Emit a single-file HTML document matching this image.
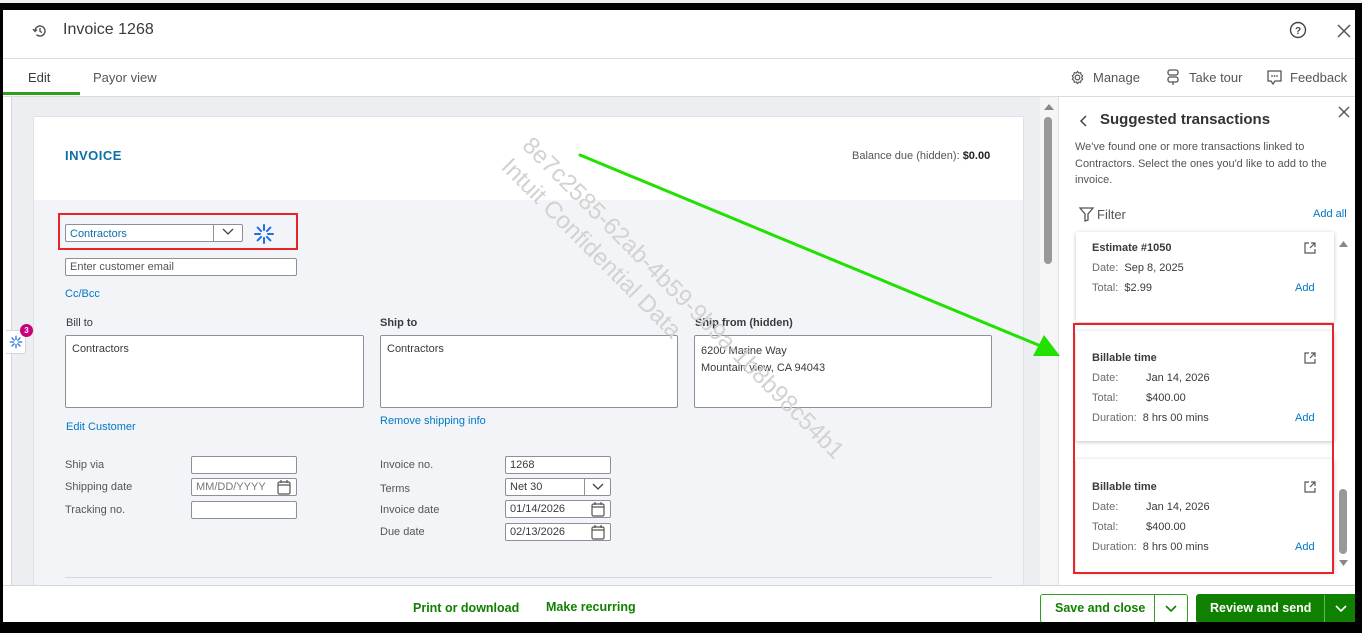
<!DOCTYPE html>
<html><head><meta charset="utf-8"><style>
*{box-sizing:border-box;margin:0;padding:0}
body{width:1362px;height:633px;overflow:hidden;background:#000;font-family:"Liberation Sans",Arial,sans-serif;position:relative;color:#393a3d}
.a{position:absolute}
.frame{position:absolute;left:3px;top:10px;width:1352px;height:612px;background:#fff;overflow:hidden}
.lbl{font-size:11px;color:#393a3d}
.inp{position:absolute;background:#fff;border:1px solid #8d9096;border-radius:2px;font-size:11px;padding:2px 4px;color:#393a3d}
.link{color:#0077c5;font-size:11px}
.card{position:absolute;background:#fff;box-shadow:0 1px 4px rgba(0,0,0,.25);border-radius:2px}
.ct{font-size:11px;color:#393a3d;font-weight:bold}
.cr{font-size:11px;color:#6b6c72}
.cr b{font-weight:normal;color:#393a3d}
.add{color:#0077c5;font-size:11px}
</style></head><body>
<div class="a" style="left:0;top:0;width:1362px;height:3px;background:#f0f0f0"></div>
<div class="frame">
 <svg class="a" style="left:28px;top:12px" width="18" height="18" viewBox="0 0 18 18"><path d="M4 9a5 5 0 1 1 1.5 3.6" fill="none" stroke="#555" stroke-width="1.5"/><path d="M2 7l2 2.5 2-2" fill="none" stroke="#555" stroke-width="1.4"/><path d="M9 6v3.3l2 1.3" fill="none" stroke="#555" stroke-width="1.4"/></svg>
 <div class="a" style="left:60px;top:11px;font-size:16px;color:#393a3d">Invoice 1268</div>
 <svg class="a" style="left:1286px;top:11px" width="18" height="18" viewBox="0 0 18 18"><circle cx="9" cy="9" r="7.5" fill="none" stroke="#444" stroke-width="1.4"/><text x="9" y="13" text-anchor="middle" font-size="10" font-weight="bold" fill="#444" font-family="Liberation Sans">?</text></svg>
 <svg class="a" style="left:1334px;top:14px" width="14" height="14"><path d="M1 1L13 13M13 1L1 13" stroke="#555" stroke-width="1.5"/></svg>
 <div class="a" style="left:0;top:48px;width:1352px;height:1px;background:#dcdcdc"></div>
 <div class="a" style="left:25px;top:60px;font-size:13px">Edit</div>
 <div class="a" style="left:90px;top:60px;font-size:13px;color:#555">Payor view</div>
 <div class="a" style="left:0;top:82px;width:77px;height:3px;background:#2ca01c"></div>
 <svg class="a" style="left:1067px;top:60px" width="15" height="15" viewBox="0 0 16 16"><circle cx="8" cy="8" r="2.5" fill="none" stroke="#555" stroke-width="1.3"/><path d="M8 1.5l1.3 1.7 2.1-.4.4 2.1 1.7 1.3-1 1.8 1 1.8-1.7 1.3-.4 2.1-2.1-.4L8 14.5l-1.3-1.7-2.1.4-.4-2.1-1.7-1.3 1-1.8-1-1.8 1.7-1.3.4-2.1 2.1.4z" fill="none" stroke="#555" stroke-width="1.2"/></svg>
 <div class="a" style="left:1090px;top:60px;font-size:13px;color:#555">Manage</div>
 <svg class="a" style="left:1163px;top:59px" width="14" height="16"><rect x="2" y="1" width="10" height="5" rx="2" fill="none" stroke="#555" stroke-width="1.3"/><rect x="2" y="8" width="10" height="5" rx="2" fill="none" stroke="#555" stroke-width="1.3"/><path d="M7 13v3" stroke="#555" stroke-width="1.3"/></svg>
 <div class="a" style="left:1186px;top:60px;font-size:13px;color:#555">Take tour</div>
 <svg class="a" style="left:1263px;top:59px" width="17" height="17"><path d="M2 2h13v10H9l-2 3-2-3H2z" fill="none" stroke="#555" stroke-width="1.3"/><circle cx="6" cy="7" r=".9" fill="#555"/><circle cx="8.5" cy="7" r=".9" fill="#555"/><circle cx="11" cy="7" r=".9" fill="#555"/></svg>
 <div class="a" style="left:1287px;top:60px;font-size:13px;color:#555">Feedback</div>
 <div class="a" style="left:0;top:86px;width:1352px;height:1px;background:#dcdcdc"></div>

 <div class="a" style="left:0;top:87px;width:1037px;height:488px;background:#eceef1"></div>
 <div class="a" style="left:0;top:87px;width:9px;height:488px;background:#fff;border-right:1px solid #d4d7dc"></div>
 <div class="a" style="left:30px;top:106px;width:991px;height:480px;background:#f3f4f7;border:1px solid #dfe1e5"></div>
 <div class="a" style="left:30px;top:106px;width:991px;height:84px;background:#fff;border:1px solid #dfe1e5;border-bottom:none"></div>
 <div class="a" style="left:62px;top:138px;font-size:13px;font-weight:bold;color:#0d6fa8;letter-spacing:.5px">INVOICE</div>
 <div class="a" style="left:849px;top:140px;font-size:11px;color:#555">Balance due (hidden): <b style="color:#222">$0.00</b></div>

 <div class="a" style="left:55px;top:203px;width:240px;height:37px;border:2px solid #e8232a"></div>
 <div class="inp" style="left:62px;top:214px;width:178px;height:18px;color:#0d6fa8;padding-top:3px">Contractors</div>
 <div class="a" style="left:210px;top:215px;width:1px;height:16px;background:#8d9096"></div>
 <svg class="a" style="left:219px;top:218px" width="12" height="8"><path d="M1 1l5 5 5-5" fill="none" stroke="#444" stroke-width="1.3"/></svg>
 <svg class="a" style="left:250px;top:213px" width="22" height="22" viewBox="0 0 22 22"><g stroke="#1f6ee0" stroke-width="2" stroke-linecap="round"><path d="M11 2v5M11 15v5M2 11h5M15 11h5M4.6 4.6l3.5 3.5M13.9 13.9l3.5 3.5M17.4 4.6l-3.5 3.5M8.1 13.9l-3.5 3.5"/></g></svg>
 <div class="inp" style="left:62px;top:248px;width:232px;height:18px;color:#555">Enter customer email</div>
 <div class="a link" style="left:62px;top:278px">Cc/Bcc</div>

 <div class="a lbl" style="left:63px;top:307px">Bill to</div>
 <div class="a lbl" style="left:377px;top:307px;font-weight:bold">Ship to</div>
 <div class="a lbl" style="left:692px;top:307px;font-weight:bold">Ship from (hidden)</div>
 <div class="inp" style="left:62px;top:325px;width:299px;height:73px;padding:7px 6px">Contractors</div>
 <div class="inp" style="left:377px;top:325px;width:298px;height:73px;padding:7px 6px">Contractors</div>
 <div class="inp" style="left:691px;top:325px;width:298px;height:73px;padding:7px 6px;line-height:17px">6200 Marine Way<br>Mountain view, CA 94043</div>
 <div class="a link" style="left:63px;top:411px">Edit Customer</div>
 <div class="a link" style="left:377px;top:405px">Remove shipping info</div>

 <div class="a lbl" style="left:62px;top:449px;color:#555">Ship via</div>
 <div class="a lbl" style="left:62px;top:471px;color:#555">Shipping date</div>
 <div class="a lbl" style="left:62px;top:494px;color:#555">Tracking no.</div>
 <div class="inp" style="left:188px;top:446px;width:106px;height:18px"></div>
 <div class="inp" style="left:188px;top:468px;width:106px;height:18px;color:#777">MM/DD/YYYY</div>
 <div class="inp" style="left:188px;top:491px;width:106px;height:18px"></div>
 <div class="a lbl" style="left:377px;top:449px;color:#555">Invoice no.</div>
 <div class="a lbl" style="left:377px;top:473px;color:#555">Terms</div>
 <div class="a lbl" style="left:377px;top:494px;color:#555">Invoice date</div>
 <div class="a lbl" style="left:377px;top:516px;color:#555">Due date</div>
 <div class="inp" style="left:502px;top:446px;width:106px;height:18px">1268</div>
 <div class="inp" style="left:502px;top:468px;width:106px;height:18px">Net 30</div>
 <div class="a" style="left:581px;top:469px;width:1px;height:16px;background:#8d9096"></div>
 <svg class="a" style="left:589px;top:473px" width="12" height="8"><path d="M1 1l5 5 5-5" fill="none" stroke="#444" stroke-width="1.3"/></svg>
 <div class="inp" style="left:502px;top:490px;width:106px;height:18px">01/14/2026</div>
 <div class="inp" style="left:502px;top:513px;width:106px;height:18px">02/13/2026</div>
 <svg class="a" style="left:274px;top:469px" width="14" height="16"><rect x="1" y="3" width="12" height="12" rx="1.5" fill="none" stroke="#555" stroke-width="1.2"/><path d="M1 6h12M4 1v3M10 1v3" stroke="#555" stroke-width="1.2"/></svg>
 <svg class="a" style="left:588px;top:491px" width="14" height="16"><rect x="1" y="3" width="12" height="12" rx="1.5" fill="none" stroke="#555" stroke-width="1.2"/><path d="M1 6h12M4 1v3M10 1v3" stroke="#555" stroke-width="1.2"/></svg>
 <svg class="a" style="left:588px;top:514px" width="14" height="16"><rect x="1" y="3" width="12" height="12" rx="1.5" fill="none" stroke="#555" stroke-width="1.2"/><path d="M1 6h12M4 1v3M10 1v3" stroke="#555" stroke-width="1.2"/></svg>
 <div class="a" style="left:62px;top:567px;width:927px;height:1px;background:#d4d7dc"></div>

 <div class="a" style="left:3px;top:320px;width:20px;height:24px;background:#fff;border:1px solid #d4d7dc;border-left:none;border-radius:0 3px 3px 0"></div>
 <svg class="a" style="left:6px;top:325px" width="14" height="14" viewBox="0 0 22 22"><g stroke="#1f6ee0" stroke-width="2" stroke-linecap="round"><path d="M11 2v5M11 15v5M2 11h5M15 11h5M4.6 4.6l3.5 3.5M13.9 13.9l3.5 3.5M17.4 4.6l-3.5 3.5M8.1 13.9l-3.5 3.5"/></g></svg>
 <div class="a" style="left:17px;top:314px;width:13px;height:13px;border-radius:50%;background:#c9007a;color:#fff;font-size:8px;font-weight:bold;text-align:center;line-height:13px">3</div>

 <div class="a" style="left:533px;top:122px;transform:rotate(45deg);transform-origin:0 0;font-size:24px;color:#d2d2d2;white-space:nowrap">8e7c2585-62ab-4b59-9b9a-1b8b98c54b1</div>
 <div class="a" style="left:512px;top:143px;transform:rotate(45deg);transform-origin:0 0;font-size:24px;color:#d2d2d2;white-space:nowrap">Intuit Confidential Data</div>

 <div class="a" style="left:1037px;top:87px;width:18px;height:488px;background:#f5f5f5"></div>
 <svg class="a" style="left:1041px;top:93px" width="10" height="7"><path d="M0 7L5 1 10 7z" fill="#888"/></svg>
 <div class="a" style="left:1041px;top:107px;width:8px;height:147px;border-radius:4px;background:#999"></div>

 <div class="a" style="left:1055px;top:87px;width:297px;height:488px;background:#fff;border-left:1px solid #e4e4e4"></div>
 <svg class="a" style="left:1335px;top:96px" width="12" height="12"><path d="M1 1L11 11M11 1L1 11" stroke="#555" stroke-width="1.4"/></svg>
 <svg class="a" style="left:1076px;top:104px" width="10" height="14"><path d="M7 2L2 7l5 5" fill="none" stroke="#444" stroke-width="1.5"/></svg>
 <div class="a" style="left:1097px;top:101px;font-size:15px;font-weight:bold;color:#333">Suggested transactions</div>
 <div class="a" style="left:1072px;top:129px;font-size:11px;line-height:16.5px;color:#555;width:280px">We've found one or more transactions linked to Contractors. Select the ones you'd like to add to the invoice.</div>
 <svg class="a" style="left:1076px;top:196px" width="16" height="16"><path d="M1 2h13L9 8v6l-3 1V8z" fill="none" stroke="#555" stroke-width="1.3"/></svg>
 <div class="a" style="left:1094px;top:197px;font-size:13px;color:#555">Filter</div>
 <div class="a add" style="left:1310px;top:198px">Add all</div>

 <div class="card" style="left:1073px;top:222px;width:258px;height:90px;border-top:none">
  <div class="a ct" style="left:16px;top:10px">Estimate #1050</div>
  <div class="a cr" style="left:16px;top:30px">Date:&nbsp; <b>Sep 8, 2025</b></div>
  <div class="a cr" style="left:16px;top:50px">Total:&nbsp; <b>$2.99</b></div>
  <div class="a add" style="left:219px;top:50px">Add</div>
 </div>
 <div class="card" style="left:1073px;top:321px;width:258px;height:110px">
  <div class="a ct" style="left:16px;top:21px">Billable time</div>
  <div class="a cr" style="left:16px;top:41px">Date:</div><div class="a cr" style="left:70px;top:41px;color:#393a3d">Jan 14, 2026</div>
  <div class="a cr" style="left:16px;top:61px">Total:</div><div class="a cr" style="left:70px;top:61px;color:#393a3d">$400.00</div>
  <div class="a cr" style="left:16px;top:81px">Duration:&nbsp; <b>8 hrs 00 mins</b></div>
  <div class="a add" style="left:219px;top:81px">Add</div>
 </div>
 <div class="card" style="left:1073px;top:449px;width:258px;height:113px">
  <div class="a ct" style="left:16px;top:22px">Billable time</div>
  <div class="a cr" style="left:16px;top:42px">Date:</div><div class="a cr" style="left:70px;top:42px;color:#393a3d">Jan 14, 2026</div>
  <div class="a cr" style="left:16px;top:62px">Total:</div><div class="a cr" style="left:70px;top:62px;color:#393a3d">$400.00</div>
  <div class="a cr" style="left:16px;top:82px">Duration:&nbsp; <b>8 hrs 00 mins</b></div>
  <div class="a add" style="left:219px;top:82px">Add</div>
 </div>
 <svg class="a" style="left:1301px;top:232px" width="12" height="12"><path d="M5 1H1v10h10V7M7 1h4v4M11 1L6 6" fill="none" stroke="#555" stroke-width="1.2"/></svg>
 <svg class="a" style="left:1301px;top:342px" width="12" height="12"><path d="M5 1H1v10h10V7M7 1h4v4M11 1L6 6" fill="none" stroke="#555" stroke-width="1.2"/></svg>
 <svg class="a" style="left:1301px;top:471px" width="12" height="12"><path d="M5 1H1v10h10V7M7 1h4v4M11 1L6 6" fill="none" stroke="#555" stroke-width="1.2"/></svg>
 <div class="a" style="left:1070px;top:313px;width:261px;height:251px;border:2px solid #e8232a"></div>
 <svg class="a" style="left:1336px;top:230px" width="9" height="7"><path d="M0 7L4.5 1 9 7z" fill="#888"/></svg>
 <div class="a" style="left:1336px;top:479px;width:8px;height:65px;border-radius:4px;background:#999"></div>
 <svg class="a" style="left:1336px;top:550px" width="9" height="7"><path d="M0 0L4.5 6 9 0z" fill="#888"/></svg>

 <svg class="a" style="left:0;top:0" width="1352" height="612"><path d="M577 145L1040 337" stroke="#22e000" stroke-width="3" stroke-linecap="round"/><path d="M1057 346L1030 346L1041 325z" fill="#22e000"/></svg>

 <div class="a" style="left:0;top:575px;width:1352px;height:37px;background:#fff;border-top:1px solid #d4d7dc"></div>
 <div class="a" style="left:410px;top:591px;font-size:12.5px;font-weight:bold;color:#108000">Print or download</div>
 <div class="a" style="left:543px;top:590px;font-size:12.5px;font-weight:bold;color:#108000">Make recurring</div>
 <div class="a" style="left:1037px;top:584px;width:148px;height:29px;border:1px solid #2ca01c;border-radius:3px;background:#fff"></div>
 <div class="a" style="left:1052px;top:591px;font-size:12.5px;font-weight:bold;color:#108000">Save and close</div>
 <div class="a" style="left:1151px;top:585px;width:1px;height:27px;background:#2ca01c"></div>
 <svg class="a" style="left:1162px;top:595px" width="12" height="8"><path d="M1 1l5 5 5-5" fill="none" stroke="#108000" stroke-width="1.6"/></svg>
 <div class="a" style="left:1193px;top:584px;width:165px;height:29px;border-radius:3px;background:#108000"></div>
 <div class="a" style="left:1207px;top:591px;font-size:12.5px;font-weight:bold;color:#fff">Review and send</div>
 <div class="a" style="left:1321px;top:585px;width:1px;height:27px;background:#5fb85a"></div>
 <svg class="a" style="left:1332px;top:595px" width="12" height="8"><path d="M1 1l5 5 5-5" fill="none" stroke="#fff" stroke-width="1.6"/></svg>
</div>
</body></html>
